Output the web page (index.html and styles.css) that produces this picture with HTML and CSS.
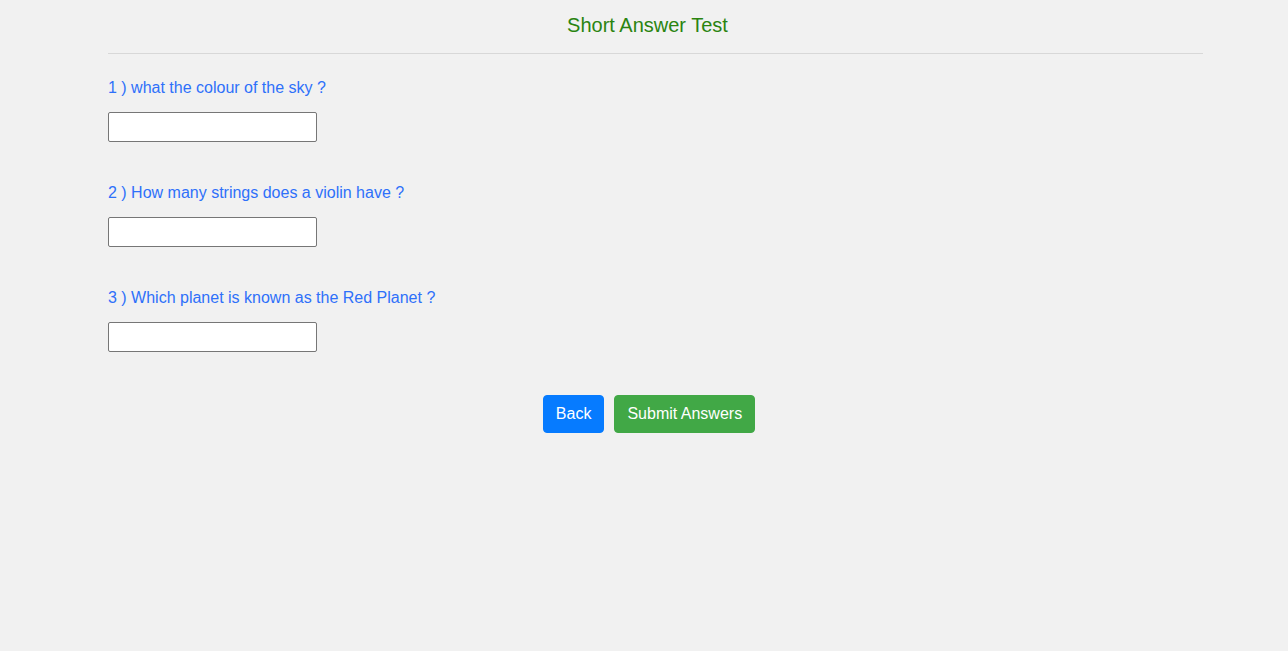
FILE: index.html
```html
<!DOCTYPE html>
<html lang="en">
<head>
<meta charset="utf-8">
<title>Short Answer Test</title>
<link rel="stylesheet" href="styles.css">
</head>
<body>
<main class="page">
  <h1 class="title">Short Answer Test</h1>
  <form class="quiz">
    <div class="question">
      <label class="prompt" for="q1">1 ) what the colour of the sky ?</label>
      <input class="answer" id="q1" type="text">
    </div>
    <div class="question">
      <label class="prompt" for="q2">2 ) How many strings does a violin have ?</label>
      <input class="answer" id="q2" type="text">
    </div>
    <div class="question">
      <label class="prompt" for="q3">3 ) Which planet is known as the Red Planet ?</label>
      <input class="answer" id="q3" type="text">
    </div>
    <div class="actions">
      <button class="btn btn-back" type="button">Back</button>
      <button class="btn btn-submit" type="submit">Submit Answers</button>
    </div>
  </form>
</main>
</body>
</html>
```

FILE: styles.css
```css
*, *::before, *::after {
  box-sizing: border-box;
}

body {
  margin: 0;
  background: #f1f1f1;
  font-family: "Liberation Sans", Arial, sans-serif;
  font-size: 16px;
  line-height: 24px;
}

.page {
  padding: 10px 85px 0 108px;
}

.title {
  margin: 0;
  padding: 0 16px 13px 0;
  border-bottom: 1px solid #d8d8d8;
  color: #2a8410;
  font-size: 20px;
  font-weight: 400;
  line-height: 30px;
  text-align: center;
}

.quiz {
  display: flex;
  flex-direction: column;
  gap: 39px;
  padding-top: 22px;
}

.question {
  display: flex;
  flex-direction: column;
  align-items: flex-start;
  gap: 12px;
}

.prompt {
  color: #2e70fa;
}

.answer {
  width: 209px;
  height: 30px;
  padding: 1px 2px;
  border: 1px solid #767676;
  border-radius: 2px;
  background: #fff;
  font: inherit;
}

.actions {
  display: flex;
  justify-content: center;
  gap: 10px;
  margin-top: 4px;
  padding-right: 13px;
}

.btn {
  padding: 6px 12px;
  border: 1px solid transparent;
  border-radius: 4px;
  color: #fff;
  font: inherit;
}

.btn-back {
  border-color: #067bff;
  background: #067bff;
}

.btn-submit {
  border-color: #41a846;
  background: #41a846;
}
```
